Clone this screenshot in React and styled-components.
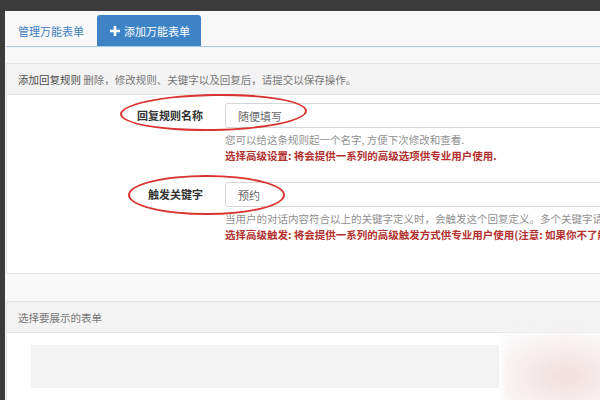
import React from 'react';
import styled, { createGlobalStyle } from 'styled-components';

const GlobalStyle = createGlobalStyle`
  html, body {
    margin: 0;
    padding: 0;
    background: #3b3b3b;
    overflow: hidden;
  }
  body {
    font-family: "Noto Sans CJK SC", "Noto Sans", sans-serif;
    font-size: 11px;
    color: #555;
  }
`;

const Shell = styled.div`
  padding: 11px 0 0 5px;
  height: 400px;
  box-sizing: border-box;
`;

const Page = styled.div`
  position: relative;
  width: 900px;
  height: 100%;
  background: #f8f8f8;
  padding-left: 1px;
  box-sizing: border-box;
  overflow: hidden;
`;

const TabBar = styled.div`
  display: flex;
  margin-top: 4px;
  height: 31px;
  border-bottom: 1px solid #a9c9e8;
`;

const Tab = styled.div`
  display: flex;
  align-items: center;
  gap: 4px;
  padding: ${(p) => (p.active ? '0 11px 0 13px' : '0 12px')};
  margin-right: ${(p) => (p.active ? '0' : '1px')};
  border-radius: 3px 3px 0 0;
  background: ${(p) => (p.active ? '#3d83c6' : 'transparent')};
  color: ${(p) => (p.active ? '#fff' : '#3f80bf')};
  font-size: 11px;
`;

const Panel = styled.div`
  margin-top: ${(p) => p.top}px;
  background: #fff;
  border: 1px solid #e3e3e3;
`;

const PanelHeading = styled.div`
  height: 30px;
  display: flex;
  align-items: center;
  padding-left: 11px;
  background: #f3f3f3;
  border-bottom: 1px solid #e4e4e4;
  color: #777;
  font-size: 10.5px;
`;

const Strong = styled.span`
  color: #4a4a4a;
`;

const FormBody = styled.div`
  padding: 8px 0 30px;
`;

const Row = styled.div`
  position: relative;
  display: grid;
  grid-template-columns: 196px 1fr;
  column-gap: 22px;
  margin-top: ${(p) => p.gap || 0}px;
`;

const Label = styled.div`
  text-align: right;
  line-height: 25px;
  font-weight: bold;
  color: #333;
  font-size: 11px;
`;

const Input = styled.div`
  height: 25px;
  box-sizing: border-box;
  border: 1px solid #d6d6d6;
  border-radius: 3px;
  display: flex;
  align-items: center;
  padding-left: 12px;
  color: #666;
  font-size: 11px;
  background: #fff;
`;

const Help = styled.div`
  grid-column: 2;
  line-height: 16px;
  white-space: nowrap;
  font-size: 10.5px;
  color: ${(p) => (p.warn ? '#b3312f' : '#909090')};
  font-weight: ${(p) => (p.warn ? 'bold' : 'normal')};
  margin-top: ${(p) => p.top || 0}px;
`;

const Circle = styled.div`
  position: absolute;
  left: ${(p) => p.x}px;
  top: ${(p) => p.y}px;
  width: ${(p) => p.w}px;
  height: ${(p) => p.h}px;
  border: 2px solid #d9342f;
  border-radius: 50%;
  box-sizing: border-box;
  transform: rotate(${(p) => p.tilt}deg);
  pointer-events: none;
`;

const ListBody = styled.div`
  padding: 12px 0 40px 24px;
`;

const Placeholder = styled.div`
  width: 468px;
  height: 43px;
  background: #f4f4f4;
`;

const Smudge = styled.div`
  position: absolute;
  left: 498px;
  top: 320px;
  width: 140px;
  height: 90px;
  background: radial-gradient(ellipse at 45% 50%, rgba(240, 215, 215, 0.85) 0%, rgba(245, 235, 235, 0.8) 45%, rgba(248, 246, 246, 0.7) 75%, rgba(250, 250, 250, 0) 100%);
  filter: blur(3px);
`;

const PlusIcon = () => (
  <svg width="10" height="10" viewBox="0 0 10 10">
    <path d="M3.7 0h2.6v3.7H10v2.6H6.3V10H3.7V6.3H0V3.7h3.7z" fill="#fff" />
  </svg>
);

const App = () => (
  <>
    <GlobalStyle />
    <Shell>
      <Page>
        <TabBar>
          <Tab>管理万能表单</Tab>
          <Tab active>
            <PlusIcon />
            添加万能表单
          </Tab>
        </TabBar>

        <Panel top={16}>
          <PanelHeading>
            <Strong>添加回复规则</Strong>&nbsp;删除，修改规则、关键字以及回复后，请提交以保存操作。
          </PanelHeading>
          <FormBody>
            <Row>
              <Label>回复规则名称</Label>
              <Input>随便填写</Input>
              <Help top={4}>您可以给这条规则起一个名字, 方便下次修改和查看.</Help>
              <Help warn>选择高级设置: 将会提供一系列的高级选项供专业用户使用.</Help>
              <Circle x={113} y={-9} w={187} h={37} tilt={-1} />
            </Row>
            <Row gap={18}>
              <Label>触发关键字</Label>
              <Input>预约</Input>
              <Help top={4}>当用户的对话内容符合以上的关键字定义时，会触发这个回复定义。多个关键字请使用逗号隔开</Help>
              <Help warn>选择高级触发: 将会提供一系列的高级触发方式供专业用户使用(注意: 如果你不了解, 请不要使用).</Help>
              <Circle x={121} y={-7} w={157} h={40} tilt={0} />
            </Row>
          </FormBody>
        </Panel>

        <Panel top={27}>
          <PanelHeading>选择要展示的表单</PanelHeading>
          <ListBody>
            <Placeholder />
          </ListBody>
        </Panel>
        <Smudge />
      </Page>
    </Shell>
  </>
);

export default App;
